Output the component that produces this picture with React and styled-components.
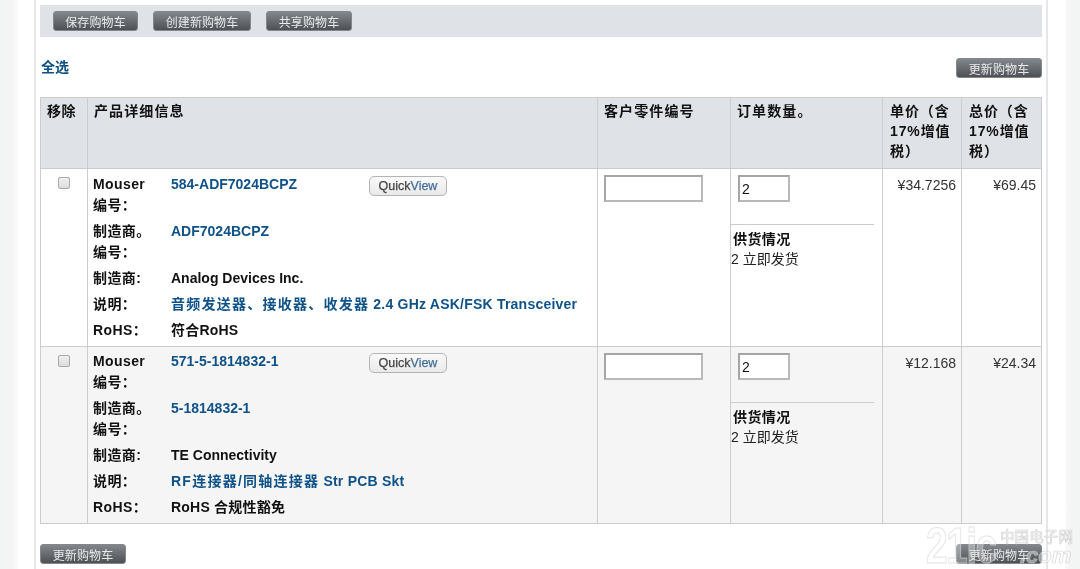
import React from "react";
import styled, { createGlobalStyle } from "styled-components";

const Global = createGlobalStyle`
  html, body { margin: 0; padding: 0; background: #fff; }
  body { width: 1080px; height: 569px; overflow: hidden; font-family: "Liberation Sans", "Noto Sans CJK SC", sans-serif; font-size: 14px; color: #111; }
`;
const Shell = styled.div`
  display: flex; width: 1080px; height: 569px; overflow: hidden; position: relative; filter: blur(0.3px);
`;
const GutterLeft = styled.div`
  width: 18px; flex: none; background: linear-gradient(to right, #f3f4f4 0%, #f5f5f5 70%, #fbfbfb 100%);
`;
const GutterRight = styled.div`
  width: 15px; flex: none; margin-left: auto; background: linear-gradient(to left, #f3f4f4 0%, #f5f5f5 70%, #fbfbfb 100%);
`;
const Main = styled.main`
  margin-left: 16px; width: 1014px; flex: none; height: 569px; box-sizing: border-box;
  border-left: 2px solid #e6e7e9; border-right: 2px solid #e6e7e9;
  padding: 5px 4px 0 4px;
`;
const Toolbar = styled.div`
  display: flex; gap: 15px; align-items: center; height: 32px; background: #dfe2e6; padding: 0 0 0 13px;
  box-sizing: border-box;
`;
const DarkButton = styled.button`
  height: 20px; width: ${p => p.$w || 86}px; box-sizing: border-box; padding: 0; flex: none;
  border: 1px solid #83878b; border-radius: 3px;
  background: linear-gradient(to bottom, #83878b 0%, #6b6f73 45%, #4d5054 100%);
  color: #e9eaeb; font: 12px "Liberation Sans", "Noto Sans CJK SC", sans-serif; letter-spacing: 0.1px;
`;
const Toolbar2 = styled.div`
  display: flex; justify-content: space-between; align-items: flex-start; height: 60px; padding: 17px 0 0 1px; box-sizing: border-box;
`;
const SelectAll = styled.a`
  color: #0b4f85; font-weight: 700; font-size: 14px; line-height: 24px; margin-top: 1px;
`;
const UpdateTop = styled(DarkButton)`
  margin-top: 4px;
`;
const Table = styled.table`
  width: 1001px; table-layout: fixed; border-collapse: collapse; border: 1px solid #ccc;
`;
const HeadCell = styled.th`
  background: #dfe2e6; border: 1px solid #ccc; text-align: left; vertical-align: top; font-size: 14px; font-weight: 700;
  line-height: 20px; padding: 3px 3px 5px 6px; height: 71px; box-sizing: border-box; color: #111; letter-spacing: ${p => p.$tight ? 0.4 : 1.1}px;
`;
const PriceHead = styled(HeadCell)`
  padding-left: 7px; padding-right: 0; letter-spacing: 0.9px;
`;
const Row = styled.tr`
  background: ${p => (p.$alt ? "#f5f5f5" : "#fff")};
`;
const Cell = styled.td`
  border: 1px solid #ccc; vertical-align: top; padding: 0; height: ${p => p.$h}px; box-sizing: border-box;
`;
const RemoveBox = styled.input.attrs({ type: "checkbox" })`
  appearance: none; display: block; margin: 8px 0 0 17px; width: 12px; height: 12px; box-sizing: border-box;
  border: 1px solid #a9a9a9; border-radius: 2px; background: linear-gradient(to bottom, #f0f0f0, #dcdcdc);
`;
const Details = styled.dl`
  display: grid; grid-template-columns: 78px 1fr; grid-template-rows: 41px 41px 20px 20px 20px; row-gap: 6px; margin: ${p => p.$top}px 0 0 5px;
  line-height: 20.5px; font-size: 14px;
`;
const Label = styled.dt`
  font-weight: 700; color: #111; width: 62px; letter-spacing: 0.4px;
`;
const Value = styled.dd`
  margin: 0; display: flex; align-items: flex-start; font-weight: 700; color: #111; white-space: nowrap;
`;
const PartLink = styled.a`
  color: #0f5288; width: 198px; flex: none;
`;
const TextLink = styled.a`
  color: #0f5288;
`;
const CjkRun = styled.span`
  letter-spacing: 1.25px;
`;
const LatinRun = styled.span`
  letter-spacing: 0.22px;
`;
const QuickView = styled.button`
  width: 78px; height: 20px; margin-top: 2px; padding: 0; box-sizing: border-box; border: 1px solid #b4b4b4; border-radius: 5px;
  background: linear-gradient(to bottom, #fafafa, #e9e9e9); color: #444; font: 400 12.5px "Liberation Sans", sans-serif;
  -webkit-text-stroke: .25px currentColor;
  span { color: #45709a; }
`;
const PartInput = styled.input`
  display: block; box-sizing: border-box; width: 99px; height: 27px; margin: 6px 0 0 6px; border: 2px solid #b9b9b9; border-top-color: #a6a6a6; border-left-color: #a6a6a6; background: #fff; padding: 0;
`;
const QtyInput = styled.input`
  display: block; box-sizing: border-box; width: 52px; height: 27px; margin: 6px 0 0 7px; border: 2px solid #b9b9b9; border-top-color: #a6a6a6; border-left-color: #a6a6a6; background: #fff; padding: 0 0 0 2px;
  font: 14px "Liberation Sans", sans-serif; color: #111;
`;
const Divider = styled.hr`
  width: 143px; height: 1px; border: 0; background: #ccc; margin: 22px 0 0 0;
`;
const StockTitle = styled.div`
  font-weight: 700; line-height: 20px; margin: 4px 0 0 2px; letter-spacing: 0.4px;
`;
const StockText = styled.div`
  line-height: 20px; margin-left: 0; color: #222;
`;
const Price = styled.div`
  text-align: right; padding: 8px 5px 0 0; line-height: 16px; color: #333; font-size: 14px;
`;
const BottomBar = styled.div`
  display: flex; justify-content: space-between; padding: 20px 0 0 0;
`;
const Watermark = styled.div`
  position: absolute; left: 926px; top: 524px; width: 152px; height: 44px; pointer-events: none;
`;
const WmBig = styled.span`
  position: absolute; left: 0; top: -3px; font: 700 50px/50px "Liberation Sans", sans-serif; letter-spacing: -2px; white-space: nowrap;
  color: rgba(255,255,255,.3); -webkit-text-stroke: 1px rgba(215,215,215,.7);
  transform: scaleX(.78); transform-origin: left top;
`;
const WmCn = styled.span`
  position: absolute; left: 74px; top: 2px; font: 400 14.6px/20px "Noto Sans CJK SC", sans-serif; white-space: nowrap;
  color: rgba(255,255,255,.7); -webkit-text-stroke: .7px rgba(205,205,205,.85);
`;
const WmDomain = styled.span`
  position: absolute; left: 94px; top: 20px; font: italic 700 22px/24px "Liberation Sans", sans-serif; white-space: nowrap;
  color: rgba(255,255,255,.4); -webkit-text-stroke: .7px rgba(205,205,205,.8);
`;

const items = [
  {
    no: "584-ADF7024BCPZ", mfr: "ADF7024BCPZ", maker: "Analog Devices Inc.",
    cn: "音频发送器、接收器、收发器", en: " 2.4 GHz ASK/FSK Transceiver", rohs: "符合RoHS",
    unit: "¥34.7256", total: "¥69.45", h: 178, top: 5,
  },
  {
    no: "571-5-1814832-1", mfr: "5-1814832-1", maker: "TE Connectivity",
    cn: "RF连接器/同轴连接器", en: " Str PCB Skt", rohs: "RoHS 合规性豁免",
    unit: "¥12.168", total: "¥24.34", alt: true, h: 177, top: 4,
  },
];

export default function App() {
  return (
    <Shell>
      <Global />
      <GutterLeft />
      <Main>
        <Toolbar>
          <DarkButton $w={85}>保存购物车</DarkButton>
          <DarkButton $w={98}>创建新购物车</DarkButton>
          <DarkButton $w={86}>共享购物车</DarkButton>
        </Toolbar>
        <Toolbar2>
          <SelectAll>全选</SelectAll>
          <UpdateTop>更新购物车</UpdateTop>
        </Toolbar2>
        <Table>
          <colgroup>
            <col style={{ width: 47 }} />
            <col style={{ width: 510 }} />
            <col style={{ width: 133 }} />
            <col style={{ width: 152 }} />
            <col style={{ width: 79 }} />
            <col style={{ width: 80 }} />
          </colgroup>
          <thead>
            <tr>
              <HeadCell $tight>移除</HeadCell>
              <HeadCell>产品详细信息</HeadCell>
              <HeadCell>客户零件编号</HeadCell>
              <HeadCell>订单数量。</HeadCell>
              <PriceHead>单价（含17%增值税）</PriceHead>
              <PriceHead>总价（含17%增值税）</PriceHead>
            </tr>
          </thead>
          <tbody>
            {items.map(it => (
              <Row key={it.no} $alt={it.alt}>
                <Cell $h={it.h}><RemoveBox /></Cell>
                <Cell $h={it.h}>
                  <Details $top={it.top}>
                    <Label>Mouser 编号：</Label>
                    <Value><PartLink>{it.no}</PartLink><QuickView>Quick<span>View</span></QuickView></Value>
                    <Label>制造商。 编号：</Label>
                    <Value><TextLink>{it.mfr}</TextLink></Value>
                    <Label>制造商:</Label>
                    <Value>{it.maker}</Value>
                    <Label>说明：</Label>
                    <Value><TextLink><CjkRun>{it.cn}</CjkRun><LatinRun>{it.en}</LatinRun></TextLink></Value>
                    <Label>RoHS：</Label>
                    <Value><LatinRun>{it.rohs}</LatinRun></Value>
                  </Details>
                </Cell>
                <Cell $h={it.h}><PartInput /></Cell>
                <Cell $h={it.h}>
                  <QtyInput defaultValue="2" />
                  <Divider />
                  <StockTitle>供货情况</StockTitle>
                  <StockText>2 立即发货</StockText>
                </Cell>
                <Cell $h={it.h}><Price>{it.unit}</Price></Cell>
                <Cell $h={it.h}><Price>{it.total}</Price></Cell>
              </Row>
            ))}
          </tbody>
        </Table>
        <BottomBar>
          <DarkButton>更新购物车</DarkButton>
          <DarkButton>更新购物车</DarkButton>
        </BottomBar>
      </Main>
      <GutterRight />
      <Watermark>
        <WmBig>21ic</WmBig>
        <WmCn>中国电子网</WmCn>
        <WmDomain>.com</WmDomain>
      </Watermark>
    </Shell>
  );
}
